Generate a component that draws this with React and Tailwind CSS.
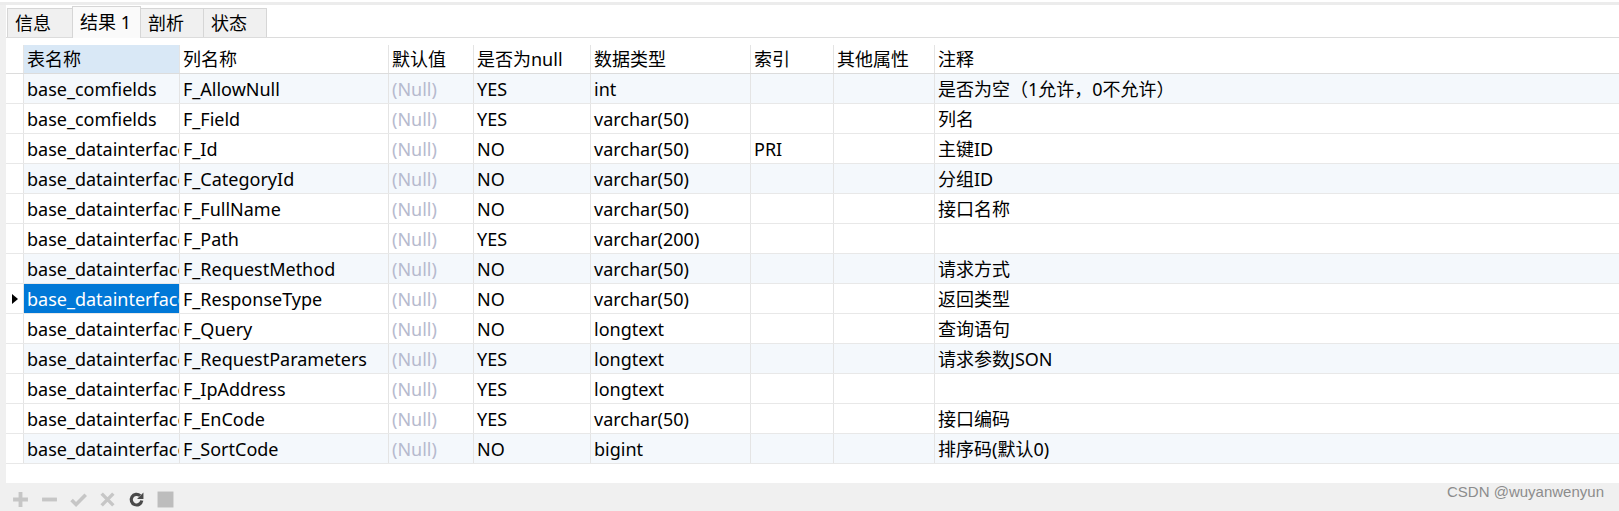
import React from "react";

const rows = [
  ["base_comfields", "F_AllowNull", "YES", "int", "", "是否为空（1允许，0不允许）"],
  ["base_comfields", "F_Field", "YES", "varchar(50)", "", "列名"],
  ["base_datainterface", "F_Id", "NO", "varchar(50)", "PRI", "主键ID"],
  ["base_datainterface", "F_CategoryId", "NO", "varchar(50)", "", "分组ID"],
  ["base_datainterface", "F_FullName", "NO", "varchar(50)", "", "接口名称"],
  ["base_datainterface", "F_Path", "YES", "varchar(200)", "", ""],
  ["base_datainterface", "F_RequestMethod", "NO", "varchar(50)", "", "请求方式"],
  ["base_datainterface", "F_ResponseType", "NO", "varchar(50)", "", "返回类型"],
  ["base_datainterface", "F_Query", "NO", "longtext", "", "查询语句"],
  ["base_datainterface", "F_RequestParameters", "YES", "longtext", "", "请求参数JSON"],
  ["base_datainterface", "F_IpAddress", "YES", "longtext", "", ""],
  ["base_datainterface", "F_EnCode", "YES", "varchar(50)", "", "接口编码"],
  ["base_datainterface", "F_SortCode", "NO", "bigint", "", "排序码(默认0)"],
];

const headers = ["表名称", "列名称", "默认值", "是否为null", "数据类型", "索引", "其他属性", "注释"];
const tabs = [
  { label: "信息", w: "w-[66px]" },
  { label: "结果 1", w: "w-[69px]", active: true },
  { label: "剖析", w: "w-[64px]" },
  { label: "状态", w: "w-[64px]" },
];

const cols = "grid grid-cols-[17px_156px_209px_85px_117px_160px_83px_101px_1fr]";
const cell = "border-l border-[#e4e4e4] pl-[3px] overflow-hidden whitespace-nowrap flex items-center";

export default function App() {
  return (
    <div className="w-[1619px] h-[511px] bg-[#f0f0f0] flex flex-col text-[18px] leading-[24px] text-black font-['Noto_Sans','Noto_Sans_CJK_SC',sans-serif] overflow-hidden">
      <div className="h-[2px] bg-white" />
      <div className="h-[3px] bg-[#ececec]" />

      {/* Main panel */}
      <div className="ml-[6px] h-[478px] bg-white flex flex-col">
        {/* Tabs */}
        <div className="h-[33px] flex items-end pl-[1px] border-b border-[#dcdcdc]">
          {tabs.map((t) => (
            <div
              key={t.label}
              className={`${t.w} pl-[7px] flex items-center border border-b-0 border-[#d6d6d6] -mr-[1px] ${
                t.active ? "h-[32px] bg-[#fafafa] relative z-10 mb-[-1px] pb-[1px]" : "h-[29px] bg-[#f0f0f0]"
              }`}
            >
              {t.label}
            </div>
          ))}
        </div>

        {/* Header */}
        <div className={`${cols} mt-[7px] h-[29px] border-b border-[#dcdcdc]`}>
          <div />
          {headers.map((h, i) => (
            <div key={h} className={`${cell} ${i === 0 ? "bg-[#d9e8f6]" : ""}`}>
              {h}
            </div>
          ))}
        </div>

        {/* Rows */}
        {rows.map((r, idx) => {
          const light = idx % 3 === 0;
          const selected = idx === 7;
          const bg = light ? "bg-[#f4f8fc]" : "";
          return (
            <div key={idx} className={`${cols} h-[30px] border-b border-[#e8e8e8]`}>
              <div className="flex items-center justify-center bg-white">
                {selected && (
                  <svg width="6" height="10" viewBox="0 0 6 10">
                    <path d="M0 0L6 5L0 10Z" fill="#000" />
                  </svg>
                )}
              </div>
              <div className={`${cell} ${selected ? "bg-[#0078d7] text-white" : bg}`}>{r[0]}</div>
              <div className={`${cell} ${bg}`}>{r[1]}</div>
              <div className={`${cell} text-[#b6bace] ${bg}`}>(Null)</div>
              <div className={`${cell} ${bg}`}>{r[2]}</div>
              <div className={`${cell} ${bg}`}>{r[3]}</div>
              <div className={`${cell} ${bg}`}>{r[4]}</div>
              <div className={`${cell} ${bg}`} />
              <div className={`${cell} ${bg}`}>{r[5]}</div>
            </div>
          );
        })}
      </div>

      {/* Bottom toolbar */}
      <div className="relative h-[28px] flex items-center gap-[12px] pl-[12px] pt-[4px]">
        <svg width="17" height="17" viewBox="0 0 16 16">
          <path d="M8 1v14M1 8h14" stroke="#c6c6c6" strokeWidth="3.6" />
        </svg>
        <svg width="17" height="17" viewBox="0 0 16 16">
          <path d="M1 8h14" stroke="#c6c6c6" strokeWidth="3.6" />
        </svg>
        <svg width="17" height="17" viewBox="0 0 16 16">
          <path d="M1.5 8.5l4.2 4.2L14.8 3.5" stroke="#c6c6c6" strokeWidth="3.4" fill="none" />
        </svg>
        <svg width="17" height="17" viewBox="0 0 16 16">
          <path d="M2.5 2.5l11 11M13.5 2.5l-11 11" stroke="#c6c6c6" strokeWidth="3.2" />
        </svg>
        <svg width="17" height="17" viewBox="0 0 16 16">
          <path d="M13 9a5 5 0 1 1-1.6-4.6" stroke="#4a4a4a" strokeWidth="3" fill="none" />
          <path d="M14.5 1.5v6h-6z" fill="#4a4a4a" />
        </svg>
        <svg width="17" height="17" viewBox="0 0 16 16">
          <rect x="0.5" y="0.5" width="15" height="15" fill="#bdbdbd" />
        </svg>
        <div className="absolute right-[15px] top-0 leading-[18px] text-[15px] text-[#8c8c8c] font-['Liberation_Sans',Arial,sans-serif]">
          CSDN @wuyanwenyun
        </div>
      </div>
    </div>
  );
}
